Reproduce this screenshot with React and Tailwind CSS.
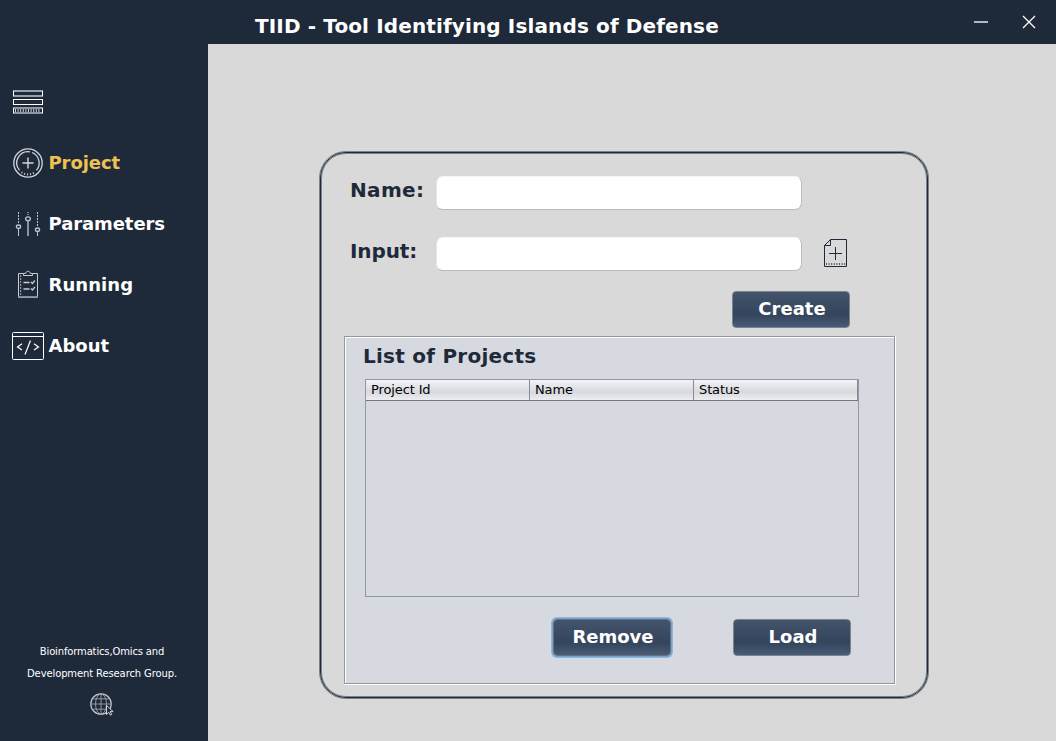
import React from "react";

function DatabaseIcon() {
  return (
    <svg width="30" height="24" viewBox="0 0 30 24" fill="none" stroke="#fff" shapeRendering="crispEdges">
      <path d="M0 1h30M0 6h30" stroke="#9a9fa9" strokeWidth="2" />
      <path d="M.5 1v5M29.5 1v5" />
      <rect x=".5" y="9.5" width="29" height="5" />
      <path d="M0 18h30M0 23h30" stroke="#8f96a0" strokeWidth="2" />
      <path d="M.5 18v5M29.5 18v5" />
      <path d="M2 20.5h26" strokeWidth="3" strokeDasharray="1 1.6" stroke="#cfd3d8" shapeRendering="auto" />
    </svg>
  );
}

function PlusCircleIcon() {
  return (
    <svg width="30" height="30" viewBox="0 0 30 30" fill="none" stroke="#d3d7dc">
      <circle cx="15" cy="15" r="14.2" strokeWidth="1.3" />
      <path d="M6.6 22.4A11.3 11.3 0 0 1 17 3.8M19 4.5A11.3 11.3 0 0 1 23.4 22.4" strokeWidth="1.3" />
      <path d="M8.5 24.2A11.2 11.2 0 0 0 21.8 24.2" strokeWidth="2" strokeDasharray="1 2" />
      <path d="M15 9.5v11M9.5 15h11" strokeWidth="1.4" />
    </svg>
  );
}

function SlidersIcon() {
  return (
    <svg width="30" height="26" viewBox="0 0 30 26" fill="none" stroke="#bfc4ca">
      <path d="M5.5 1v12M24.5 1v15" strokeDasharray="2 1" />
      <path d="M15 1v4" strokeWidth="2" strokeDasharray="1 1" stroke="#7b838d" />
      <path d="M5.5 17.5v7.5M24.5 21v4" />
      <path d="M15 10v15" strokeWidth="2" stroke="#8b929b" />
      <ellipse cx="5.5" cy="15.7" rx="2.1" ry="1.7" strokeWidth="1.3" />
      <ellipse cx="15" cy="7.7" rx="2.4" ry="1.9" strokeWidth="1.3" />
      <ellipse cx="24.5" cy="18.7" rx="2.1" ry="1.7" strokeWidth="1.3" />
    </svg>
  );
}

function ClipboardIcon() {
  return (
    <svg width="22" height="29" viewBox="0 0 22 29" fill="none" stroke="#c9cdd2">
      <path d="M6 3.5H1.5v24h19v-24H16" />
      <path d="M6.5 5.5V3.4h2.2C9 .5 13 .5 13.3 3.4h2.2v2.1z" />
      <path d="M3.7 5v20" strokeDasharray="2 1" strokeWidth=".8" />
      <path d="M6.5 12.5h6M6.5 19h6M14 12l1.4 1.5 2.5-3M14 18.5l1.4 1.5 2.5-3" strokeWidth="1.3" />
      <path d="M1 27h20" strokeWidth="1.8" stroke="#8f96a0" />
    </svg>
  );
}

function CodeWindowIcon() {
  return (
    <svg width="32" height="28" viewBox="0 0 32 28" fill="none" stroke="#fff">
      <rect x=".5" y=".5" width="31" height="27" rx="1" />
      <path d="M1 4.5h30" />
      <path d="M10 11.8l-4.5 3.1 4.5 3.1M22 11.8l4.5 3.1-4.5 3.1M18.5 8.5l-5.5 14" strokeWidth="1.2" />
    </svg>
  );
}

function GlobeIcon() {
  return (
    <svg width="24" height="23" viewBox="0 0 24 23" fill="none" stroke="#9aa1aa" strokeWidth=".9">
      <circle cx="11" cy="11" r="10.2" strokeWidth="1.2" stroke="#c3c7cc" />
      <ellipse cx="11" cy="11" rx="5.5" ry="10" />
      <path d="M11 1v20M1 11h20M3 5.8h16M3 16.2h12" />
      <path d="M16.5 12.5v9l2.2-2.2 1.6 2.9 1.4-.8-1.5-2.8h3z" fill="#1e2939" stroke="#e3e5e8" />
    </svg>
  );
}

function AddFileIcon() {
  return (
    <svg width="23" height="28" viewBox="0 0 23 28" fill="none" stroke="#1e2939">
      <path d="M6.5.5h16v27H.5v-21z" />
      <path d="M6.5.5v6h-6" />
      <path d="M11.5 8v13M5 14.5h13" />
      <path d="M2 25h20" strokeWidth="2" strokeDasharray="1 1.6" stroke="#4a535f" />
    </svg>
  );
}

const nav = [
  { label: "Project", Icon: PlusCircleIcon, style: "text-[#edc152] tracking-[-0.08px]" },
  { label: "Parameters", Icon: SlidersIcon, style: "text-white tracking-[-0.08px]" },
  { label: "Running", Icon: ClipboardIcon, style: "text-white tracking-[0.06px]" },
  { label: "About", Icon: CodeWindowIcon, style: "text-white", drop: "pt-px" },
];

function Sidebar() {
  return (
    <aside className="flex w-[208px] shrink-0 flex-col text-white">
      <div className="ml-[13px] mt-[46px] h-[42px]">
        <DatabaseIcon />
      </div>
      <nav>
        {nav.map(({ label, Icon, style, drop = "" }) => (
          <div key={label} className="flex h-[61px] items-center pl-3">
            <span className={`flex w-8 shrink-0 justify-center ${drop}`}>
              <Icon />
            </span>
            <span className={`ml-[4.5px] text-[18px] font-bold leading-5 ${style}`}>{label}</span>
          </div>
        ))}
      </nav>
      <footer className="mt-auto flex flex-col items-center pb-[25px] pr-1 text-[10px] leading-[22px]">
        <p className="tracking-[-0.15px]">Bioinformatics,Omics and</p>
        <p className="tracking-[-0.12px]">Development Research Group.</p>
        <span className="mt-2">
          <GlobeIcon />
        </span>
      </footer>
    </aside>
  );
}

function Button({ children, focused = false }) {
  return (
    <button
      className={`h-[37px] w-[118px] rounded-[4px] border bg-linear-to-b from-[#43546d] via-[#34445b] via-65% to-[#485d79] pb-[2px] pl-[2px] text-[18px] font-bold leading-5 text-white ${
        focused
          ? "border-[#68717d] shadow-[0_0_0_1px_#73a4d1,0_0_0_2px_#8fb4d9]"
          : "border-[#7c838d]"
      }`}
    >
      {children}
    </button>
  );
}

function Field({ label, tracking, children }) {
  return (
    <div className="flex h-[34px] items-center">
      <label className={`w-[86px] whitespace-nowrap pb-[6px] text-[20px] font-bold leading-6 ${tracking}`}>{label}</label>
      <input className="h-[34px] w-[366px] rounded-[7px] border border-t-[#f6f6f6] border-r-[#bdbdbd] border-b-[#bbbbbb] border-l-[#e6e6e6] bg-white px-2 outline-none" />
      {children}
    </div>
  );
}

function ProjectTable() {
  return (
    <div className="h-[218px] w-[494px] border border-[#9297a1]">
      <div className="grid h-[21px] grid-cols-3 border-b border-[#73767f] bg-linear-to-b from-[#f2f3f5] via-[#d7d9de] via-60% to-[#eceef2] text-[13px] leading-[19px] tracking-[-0.12px] text-black">
        {["Project Id", "Name", "Status"].map((title) => (
          <div key={title} className="border-r border-[#898c95] pl-[5px]">
            {title}
          </div>
        ))}
      </div>
    </div>
  );
}

export default function App() {
  return (
    <div className="flex h-[741px] w-[1056px] flex-col overflow-hidden bg-[#1e2939] font-['DejaVu_Sans',sans-serif]">
      <header className="flex h-11 shrink-0 items-center justify-between pl-[255px] pr-5">
        <h1 className="mt-[7px] whitespace-nowrap text-[20px] font-bold leading-6 tracking-[0.13px] text-white">
          TIID - Tool Identifying Islands of Defense
        </h1>
        <div className="flex items-center gap-[34px]">
          <svg width="14" height="14" viewBox="0 0 14 14">
            <path d="M0 7h14" stroke="#b4b8be" strokeWidth="2" />
          </svg>
          <svg width="14" height="14" viewBox="0 0 14 14">
            <path d="M1 1l12 12M13 1L1 13" stroke="#fff" strokeWidth="1.3" />
          </svg>
        </div>
      </header>
      <div className="flex min-h-0 flex-1">
        <Sidebar />
        <main className="flex-1 bg-[#d9d9d9] pl-28 pt-[108px] text-[#1e2939]">
          <section className="flex h-[546px] w-[608px] flex-col rounded-[26px] border border-[#1e2939] pl-[23px] pt-[23px] shadow-[0_0_0_1px_#1e293980,inset_0_0_0_1px_#1e293980]">
            <div className="flex flex-col gap-[27px] pl-[6px]">
              <Field label="Name:" tracking="tracking-[0.35px]" />
              <Field label="Input:" tracking="tracking-[-0.1px]">
                <span className="mb-[2px] ml-[22px]">
                  <AddFileIcon />
                </span>
              </Field>
            </div>
            <div className="mt-5 pl-[388px] leading-none">
              <Button>Create</Button>
            </div>
            <div className="mt-2 h-[349px] w-[552px] border-r border-b border-white">
              <div className="h-[348px] w-[551px] border border-[#9297a1] bg-[#d6d9e0] shadow-[inset_1px_1px_0_#fff]">
                <h2 className="pl-[18px] pt-[7px] text-[20px] font-bold leading-6 tracking-[0.25px]">List of Projects</h2>
                <div className="ml-5 mt-[11px]">
                  <ProjectTable />
                </div>
                <div className="mt-[22px] flex gap-[62px] pl-[208px]">
                  <Button focused>Remove</Button>
                  <Button>Load</Button>
                </div>
              </div>
            </div>
          </section>
        </main>
      </div>
    </div>
  );
}
